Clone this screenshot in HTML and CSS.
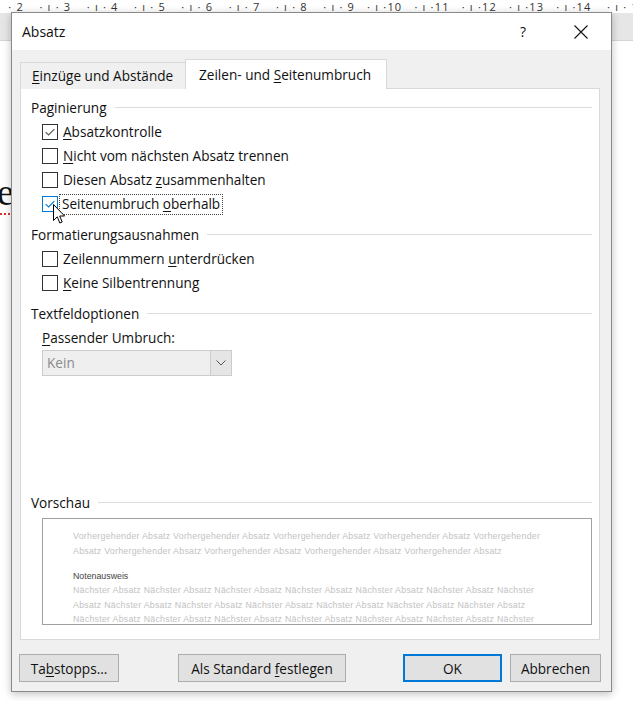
FILE: index.html
```html
<!DOCTYPE html>
<html lang="de">
<head>
    <meta charset="UTF-8">
    <title>Absatz</title>
    <link rel="stylesheet" href="styles.css">
</head>
<body>

    <!-- Word window behind the dialog -->
    <div class="ruler">
        <span class="r-cell">·&nbsp;2</span><span class="r-cell">·&nbsp;ı&nbsp;·&nbsp;3</span><span class="r-cell">·&nbsp;ı&nbsp;·&nbsp;4</span>
        <span class="r-cell">·&nbsp;ı&nbsp;·&nbsp;5</span><span class="r-cell">·&nbsp;ı&nbsp;·&nbsp;6</span><span class="r-cell">·&nbsp;ı&nbsp;·&nbsp;7</span>
        <span class="r-cell">·&nbsp;ı&nbsp;·&nbsp;8</span><span class="r-cell">·&nbsp;ı&nbsp;·&nbsp;9</span><span class="r-cell">·&nbsp;ı&nbsp;·10</span>
        <span class="r-cell">·&nbsp;ı&nbsp;·11</span><span class="r-cell">·&nbsp;ı&nbsp;·12</span><span class="r-cell">·&nbsp;ı&nbsp;·13</span>
        <span class="r-cell">·&nbsp;ı&nbsp;·14</span><span class="r-cell">·&nbsp;ı&nbsp;·&nbsp;1</span>
    </div>
    <div class="ruler-band"></div>
    <div class="page">
        <span class="page-text">e</span>
    </div>

    <!-- Absatz dialog -->
    <div class="dialog">
        <div class="titlebar">
            <span class="title">Absatz</span>
            <span class="help">?</span>
            <svg class="close" width="14" height="14" viewBox="0 0 14 14">
                <path d="M0.5 0.5 L13.5 13.5 M13.5 0.5 L0.5 13.5" stroke="#111" stroke-width="1.1" fill="none"/>
            </svg>
        </div>

        <div class="dialog-body">
            <div class="tabs">
                <div class="tab"><u>E</u>inzüge und Abstände</div>
                <div class="tab active">Zeilen- und <u>S</u>eitenumbruch</div>
            </div>

            <div class="panel">
                <div class="group-title"><span>Paginierung</span></div>
                <div class="option">
                    <span class="box checked"><svg viewBox="0 0 16 16"><path d="M3 8.2 L6.4 11.4 L13 4.6" /></svg></span>
                    <span class="label"><u>A</u>bsatzkontrolle</span>
                </div>
                <div class="option">
                    <span class="box"></span>
                    <span class="label"><u>N</u>icht vom nächsten Absatz trennen</span>
                </div>
                <div class="option">
                    <span class="box"></span>
                    <span class="label">Diesen Absatz <u>z</u>usammenhalten</span>
                </div>
                <div class="option">
                    <span class="box checked hover"><svg viewBox="0 0 16 16"><path d="M3 8.2 L6.4 11.4 L13 4.6" /></svg></span>
                    <span class="label focused">Seitenumbruch <u>o</u>berhalb</span>
                    <svg class="cursor" width="13" height="21" viewBox="0 0 13 21">
                        <path d="M0.5 0.5 L0.5 16.5 L4.3 12.8 L6.8 19 L9.2 18 L6.7 12 L11.6 12 Z" fill="#fff" stroke="#000" stroke-width="1"/>
                    </svg>
                </div>

                <div class="group-title spaced"><span>Formatierungsausnahmen</span></div>
                <div class="option">
                    <span class="box"></span>
                    <span class="label">Zeilennummern <u>u</u>nterdrücken</span>
                </div>
                <div class="option">
                    <span class="box"></span>
                    <span class="label"><u>K</u>eine Silbentrennung</span>
                </div>

                <div class="group-title spaced"><span>Textfeldoptionen</span></div>
                <div class="field-label"><u>P</u>assender Umbruch:</div>
                <div class="select">
                    <span class="select-value">Kein</span>
                    <span class="select-arrow">
                        <svg width="10" height="6" viewBox="0 0 10 6"><path d="M0.5 0.5 L5 5 L9.5 0.5" stroke="#555" fill="none"/></svg>
                    </span>
                </div>

                <div class="group-title preview-title"><span>Vorschau</span></div>
                <div class="preview">
                    <div class="pv-line">Vorhergehender Absatz Vorhergehender Absatz Vorhergehender Absatz Vorhergehender Absatz Vorhergehender</div>
                    <div class="pv-line">Absatz Vorhergehender Absatz Vorhergehender Absatz Vorhergehender Absatz Vorhergehender Absatz</div>
                    <div class="pv-line current">Notenausweis</div>
                    <div class="pv-line next">Nächster Absatz Nächster Absatz Nächster Absatz Nächster Absatz Nächster Absatz Nächster Absatz Nächster</div>
                    <div class="pv-line next">Absatz Nächster Absatz Nächster Absatz Nächster Absatz Nächster Absatz Nächster Absatz Nächster Absatz</div>
                    <div class="pv-line next">Nächster Absatz Nächster Absatz Nächster Absatz Nächster Absatz Nächster Absatz Nächster Absatz Nächster</div>
                </div>
            </div>

            <div class="footer">
                <button class="btn btn-tabs">Ta<u>b</u>stopps...</button>
                <button class="btn btn-default">Als Standard <u>f</u>estlegen</button>
                <button class="btn btn-ok">OK</button>
                <button class="btn btn-cancel">Abbrechen</button>
            </div>
        </div>
    </div>

</body>
</html>
```

FILE: styles.css
```css
* {
    box-sizing: border-box;
}

body {
    margin: 0;
    width: 633px;
    height: 701px;
    overflow: hidden;
    position: relative;
    background-color: #fff;
    font-family: "Open Sans", "Noto Sans", sans-serif;
    font-size: 13.6px;
    color: #111;
}

u {
    text-decoration-thickness: 1px;
    text-underline-offset: 2px;
}

/* ---------- background window ---------- */

.ruler {
    height: 13px;
    display: flex;
    padding: 1px 0 0 3px;
    font-size: 11px;
    line-height: 12px;
    color: #333;
    white-space: nowrap;
}

.r-cell {
    width: 47.3px;
    flex: none;
    text-align: right;
    letter-spacing: 1.2px;
}

.r-cell:first-child {
    width: 21px;
}

.ruler-band {
    height: 28px;
    background-color: #e6e6e6;
    border-bottom: 1px solid #d4d4d4;
}

.page {
    padding-top: 133px;
    padding-left: 0;
}

.page-text {
    font-family: "Liberation Serif", serif;
    font-size: 38px;
    line-height: 36px;
    margin-left: -3px;
    border-bottom: 2px dotted #e03030;
}

/* ---------- dialog ---------- */

.dialog {
    position: absolute;
    left: 11px;
    top: 12px;
    width: 601px;
    height: 680px;
    border: 1px solid #8a8a8a;
    background-color: #f0f0f0;
    box-shadow: 0 2px 8px rgba(0, 0, 0, 0.25);
    display: flex;
    flex-direction: column;
}

.titlebar {
    height: 37px;
    background-color: #fff;
    display: flex;
    align-items: center;
    padding-left: 10px;
    flex: none;
}

.title {
    font-size: 14px;
    flex: 1;
}

.help {
    font-size: 14px;
    margin-right: 48px;
}

.close {
    margin-right: 23px;
}

.dialog-body {
    flex: 1;
    padding: 9px 11px 0 8px;
    display: flex;
    flex-direction: column;
}

.tabs {
    display: flex;
    align-items: flex-end;
    height: 30px;
    margin-bottom: -1px;
    position: relative;
    z-index: 1;
}

.tab {
    height: 27px;
    padding: 0 0 0 11px;
    width: 166px;
    line-height: 25px;
    border: 1px solid #d9d9d9;
    border-bottom: none;
    background-color: #f0f0f0;
}

.tab.active {
    height: 30px;
    width: 202px;
    padding-left: 13px;
    line-height: 29px;
    background-color: #fff;
    margin-left: -1px;
}

.panel {
    height: 552px;
    background-color: #fff;
    border: 1px solid #d9d9d9;
    padding: 9px 7px 0 10px;
    display: flex;
    flex-direction: column;
}

.group-title {
    display: flex;
    align-items: center;
    height: 18px;
    margin-bottom: 4px;
}

.group-title::after {
    content: "";
    flex: 1;
    height: 1px;
    background-color: #dcdcdc;
    margin-left: 8px;
}

.group-title.spaced {
    margin-top: 9px;
}

.option {
    display: flex;
    align-items: center;
    height: 24px;
    padding-left: 11px;
    position: relative;
}

.box {
    width: 16px;
    height: 16px;
    border: 1px solid #333;
    background-color: #fff;
    flex: none;
    margin-right: 4px;
}

.box svg {
    display: block;
    width: 14px;
    height: 14px;
}

.box svg path {
    fill: none;
    stroke: #555;
    stroke-width: 1.3;
}

.box.hover {
    border-color: #0078d7;
}

.box.hover svg path {
    stroke: #0078d7;
}

.label {
    line-height: 18px;
    padding: 0 1px;
}

.label.focused {
    outline: 1px dotted #444;
    outline-offset: 0;
    margin-left: -2px;
    padding: 0 2px 1px 2px;
}

.cursor {
    position: absolute;
    left: 22px;
    top: 12px;
}

.field-label {
    padding-left: 11px;
    margin-top: 3px;
    line-height: 18px;
}

.select {
    margin: 3px 0 0 11px;
    width: 190px;
    height: 26px;
    display: flex;
    border: 1px solid #cccccc;
    background-color: #efefef;
}

.select-value {
    flex: 1;
    padding-left: 4px;
    line-height: 24px;
    color: #8a8a8a;
}

.select-arrow {
    width: 21px;
    border-left: 1px solid #cccccc;
    background-color: #e5e5e5;
    display: flex;
    align-items: center;
    justify-content: center;
}

.preview-title {
    margin-top: auto;
    margin-bottom: 7px;
}

.preview {
    margin: 0 0 14px 11px;
    height: 107px;
    border: 1px solid #a0a0a0;
    padding: 10px 0 0 30px;
    overflow: hidden;
    font-family: "Liberation Sans", sans-serif;
    font-size: 8.8px;
    letter-spacing: 0.26px;
    color: #c2c2c2;
    white-space: nowrap;
}

.pv-line {
    line-height: 14.5px;
}

.pv-line.current {
    margin-top: 12px;
    color: #444;
    line-height: 13px;
    letter-spacing: 0;
}

/* ---------- footer buttons ---------- */

.footer {
    display: flex;
    margin-top: 14px;
    padding-right: 0;
}

.btn {
    height: 28px;
    font-family: inherit;
    font-size: 13.6px;
    color: #111;
    background-color: #e1e1e1;
    border: 1px solid #adadad;
    padding: 0;
}

.btn-tabs {
    width: 100px;
    margin-left: -1px;
}

.btn-default {
    width: 168px;
    margin-left: 59px;
}

.btn-ok {
    width: 99px;
    margin-left: auto;
    margin-right: 0;
    border: 2px solid #0078d7;
}

.btn-cancel {
    width: 91px;
    margin-left: 8px;
    margin-right: -1px;
}
```
